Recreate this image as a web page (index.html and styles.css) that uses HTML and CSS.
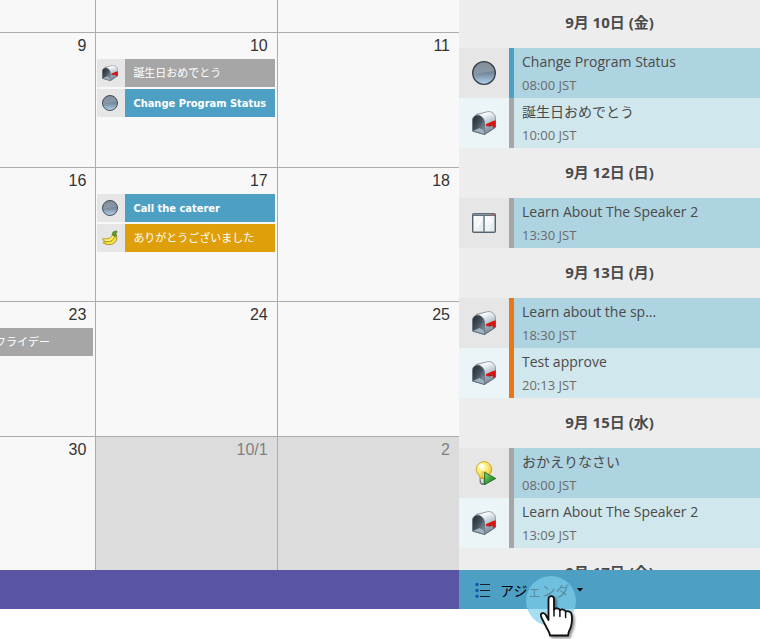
FILE: index.html
```html
<!DOCTYPE html>
<html lang="ja">
<head>
<meta charset="utf-8">
<title>カレンダー</title>
<link rel="stylesheet" href="styles.css">
</head>
<body>
<svg class="sprite" aria-hidden="true">
  <defs>
    <linearGradient id="ball-fill" x1="0" y1="0" x2="0" y2="1">
      <stop offset="0" stop-color="#7f8a94"/>
      <stop offset=".5" stop-color="#74879a"/>
      <stop offset="1" stop-color="#b4d4f0"/>
    </linearGradient>
    <linearGradient id="ball-gloss" x1="0" y1="0" x2="0" y2="1">
      <stop offset="0" stop-color="#fff" stop-opacity=".05"/>
      <stop offset="1" stop-color="#fff" stop-opacity=".16"/>
    </linearGradient>
    <linearGradient id="box-side" x1="0" y1="0" x2=".35" y2="1">
      <stop offset="0" stop-color="#8d959b"/>
      <stop offset=".22" stop-color="#fbfcfd"/>
      <stop offset=".5" stop-color="#ccd6de"/>
      <stop offset="1" stop-color="#76889a"/>
    </linearGradient>
    <linearGradient id="box-inside" x1="0" y1="0" x2="1" y2="1">
      <stop offset="0" stop-color="#20282e"/>
      <stop offset=".5" stop-color="#46535e"/>
      <stop offset="1" stop-color="#9db1c1"/>
    </linearGradient>
    <radialGradient id="bulb-glass" cx=".4" cy=".35" r=".65">
      <stop offset="0" stop-color="#fffdd8"/>
      <stop offset=".55" stop-color="#fbea6c"/>
      <stop offset="1" stop-color="#e3bd2c"/>
    </radialGradient>
    <linearGradient id="play-fill" x1="0" y1="0" x2="1" y2="1">
      <stop offset="0" stop-color="#8fdc74"/>
      <stop offset=".5" stop-color="#3fa43a"/>
      <stop offset="1" stop-color="#1c7a22"/>
    </linearGradient>
    <linearGradient id="pane-fill" x1="0" y1="0" x2="1" y2="1">
      <stop offset="0" stop-color="#fff"/>
      <stop offset="1" stop-color="#dfe8ea"/>
    </linearGradient>
  </defs>
  <symbol id="ball" viewBox="0 0 24 24">
    <circle cx="12" cy="12" r="11.3" fill="url(#ball-fill)" stroke="#343c46" stroke-width="1.3"/>
    <path d="M1.800 13C2 6 7 2 12 2s9.500 3.500 10.200 8C17 10 9 12.500 1.800 13z" fill="url(#ball-gloss)"/>
  </symbol>
  <symbol id="mailbox" viewBox="0 0 24 24">
    <path d="M4 3.500L15.500.7C20 0 23.600 3 23.600 8v8.300L12.500 23.500V13C12 8 8 4 4 3.500z" fill="url(#box-side)" stroke="#737d86" stroke-width=".7"/>
    <path d="M.5 20V9.500C.5 2 12 2.500 12.500 12v11.500z" fill="url(#box-inside)" stroke="#66727d" stroke-width=".8"/>
    <path d="M1.200 19.700L7.500 17 12 20v3z" fill="#9fb1bf"/>
    <path d="M.5 20L12.500 23.500 23.600 16.400" fill="none" stroke="#5d6b78" stroke-width=".8"/>
    <path d="M14 13.200L20 10.500 23.700 9.300v6.400L20.800 17V13.300L14 15z" fill="#e30b0b"/>
    <path d="M14 15L20.800 13.300v1.500L17 15.400z" fill="#9c1414"/>
  </symbol>
  <symbol id="window" viewBox="0 0 24 24">
    <rect x=".5" y="2.500" width="23" height="19" rx="1" fill="#63727a" stroke="#54636c"/>
    <path d="M1.500 3.300h21" stroke="#8f9ba2"/>
    <rect x="1.500" y="5" width="10" height="15.500" fill="url(#pane-fill)"/>
    <rect x="12.700" y="5" width="9.800" height="15.500" fill="url(#pane-fill)"/>
    <path d="M12.100 5v16" stroke="#82939e" stroke-width="1.500"/>
    <path d="M5 16l5-9M16 7l4 5" stroke="#fff" stroke-width="1.500"/>
    <rect x="20" y="3" width="2" height="1.500" fill="#f04848"/>
  </symbol>
  <symbol id="bulb" viewBox="0 0 24 24">
    <path d="M8 17h7v4.500L13.500 23.500h-4L8 21.500z" fill="#7d8489" stroke="#555c60" stroke-width=".6"/>
    <path d="M8.500 18h3v4h-2z" fill="#dfe4e6"/>
    <path d="M12 .6a7.800 7.800 0 0 1 7.800 7.900c0 3.500-3.300 5.200-4.100 9H8.300c-.8-3.800-4.100-5.500-4.100-9A7.800 7.800 0 0 1 12 .6z" fill="url(#bulb-glass)" stroke="#c99d22" stroke-width=".8"/>
    <path d="M10.500 17L10 10.500l2 1 2-1-.5 6.500" fill="none" stroke="#d4ae35" stroke-width=".8"/>
    <ellipse cx="9.500" cy="5" rx="3" ry="2.300" fill="#fff" opacity=".75"/>
    <path d="M12.600 11.300L23.700 17.500 12.600 23.600z" fill="url(#play-fill)" stroke="#1b6422" stroke-width=".9" stroke-linejoin="round"/>
  </symbol>
  <symbol id="banana" viewBox="0 0 16 16">
    <path d="M12 4.500C12.500 9 9 12 3 11.500L1 12.500C4 16 15 15.500 14.800 7.500L13.800 4z" fill="#f2d71c" stroke="#8f7710" stroke-width=".7"/>
    <path d="M10.500 4.500C9.500 8 6 9.500 1 8.500L.6 9.800C5 13.500 12.500 11.500 12.800 5z" fill="#fbe94c" stroke="#9c8415" stroke-width=".7"/>
    <path d="M10 4.800L11 1.800 14.500.8 15.300 2.200 13.800 3l.7 3-1.700.2z" fill="#5d9a2c" stroke="#3f6d20" stroke-width=".5"/>
    <path d="M3 10.200c3.500 1 6.500-.2 8.200-3M5 13c3.500 1 7-.5 8.500-4" fill="none" stroke="#fffac0" stroke-width=".7"/>
  </symbol>
</svg>

<div class="app">
  <main class="workspace">
    <section class="calendar" aria-label="カレンダー">
      <table class="month">
        <colgroup><col class="col-thu"><col class="col-fri"><col class="col-sat"></colgroup>
        <tbody>
          <tr class="week-partial"><td></td><td></td><td></td></tr>
          <tr>
            <td><div class="date">9</div></td>
            <td>
              <div class="date">10</div>
              <div class="chip chip-gray"><svg class="chip-icon"><use href="#mailbox"/></svg><span class="chip-label">誕生日おめでとう</span></div>
              <div class="chip chip-blue"><svg class="chip-icon"><use href="#ball"/></svg><span class="chip-label">Change Program Status</span></div>
            </td>
            <td><div class="date">11</div></td>
          </tr>
          <tr>
            <td><div class="date">16</div></td>
            <td>
              <div class="date">17</div>
              <div class="chip chip-blue"><svg class="chip-icon"><use href="#ball"/></svg><span class="chip-label">Call the caterer</span></div>
              <div class="chip chip-gold"><svg class="chip-icon"><use href="#banana"/></svg><span class="chip-label">ありがとうございました</span></div>
            </td>
            <td><div class="date">18</div></td>
          </tr>
          <tr>
            <td>
              <div class="date">23</div>
              <div class="chip chip-gray chip-continued"><span class="chip-label">フライデー</span></div>
            </td>
            <td><div class="date">24</div></td>
            <td><div class="date">25</div></td>
          </tr>
          <tr>
            <td><div class="date">30</div></td>
            <td class="outside"><div class="date">10/1</div></td>
            <td class="outside"><div class="date">2</div></td>
          </tr>
        </tbody>
      </table>
    </section>

    <aside class="agenda" aria-label="アジェンダ">
      <div class="agenda-scroll">
        <h2 class="day">9月 10日 (金)</h2>
        <ul class="entries">
          <li class="entry mark-blue"><span class="entry-icon"><svg><use href="#ball"/></svg></span><div class="entry-text"><div class="entry-title">Change Program Status</div><div class="entry-time">08:00 JST</div></div></li>
          <li class="entry mark-gray"><span class="entry-icon"><svg><use href="#mailbox"/></svg></span><div class="entry-text"><div class="entry-title">誕生日おめでとう</div><div class="entry-time">10:00 JST</div></div></li>
        </ul>
        <h2 class="day">9月 12日 (日)</h2>
        <ul class="entries">
          <li class="entry mark-gray"><span class="entry-icon"><svg><use href="#window"/></svg></span><div class="entry-text"><div class="entry-title">Learn About The Speaker 2</div><div class="entry-time">13:30 JST</div></div></li>
        </ul>
        <h2 class="day">9月 13日 (月)</h2>
        <ul class="entries">
          <li class="entry mark-orange"><span class="entry-icon"><svg><use href="#mailbox"/></svg></span><div class="entry-text"><div class="entry-title">Learn about the sp...</div><div class="entry-time">18:30 JST</div></div></li>
          <li class="entry mark-orange"><span class="entry-icon"><svg><use href="#mailbox"/></svg></span><div class="entry-text"><div class="entry-title">Test approve</div><div class="entry-time">20:13 JST</div></div></li>
        </ul>
        <h2 class="day">9月 15日 (水)</h2>
        <ul class="entries">
          <li class="entry mark-gray"><span class="entry-icon"><svg><use href="#bulb"/></svg></span><div class="entry-text"><div class="entry-title">おかえりなさい</div><div class="entry-time">08:00 JST</div></div></li>
          <li class="entry mark-gray"><span class="entry-icon"><svg><use href="#mailbox"/></svg></span><div class="entry-text"><div class="entry-title">Learn About The Speaker 2</div><div class="entry-time">13:09 JST</div></div></li>
        </ul>
        <h2 class="day">9月 17日 (金)</h2>
      </div>
    </aside>
  </main>

  <footer class="bar">
    <div class="bar-main"></div>
    <div class="bar-agenda">
      <button class="view-button" type="button">
        <svg class="list-icon" viewBox="0 0 17 17" aria-hidden="true">
          <g fill="#1259b0"><circle cx="3" cy="3.500" r="1.700"/><circle cx="3" cy="9.500" r="1.700"/><circle cx="3" cy="15.200" r="1.700"/></g>
          <path d="M6 3.500h10M6 9.500h10M6 15.500h10" stroke="#1a2226" stroke-width="1.200"/>
        </svg>
        <span>アジェンダ</span>
        <svg class="caret" viewBox="0 0 6 4" aria-hidden="true"><path d="M0 0h6L3 3.500z"/></svg>
      </button>
      <div class="pointer" aria-hidden="true">
        <svg class="hand" viewBox="0 0 36 44">
          <path d="M9.500 25V4C9.500.2 15 .2 15 4v10.500c1.500-2 5.500-1.500 5.900.8 1.900-1.500 5.300-1 5.700 1.400 2.400-1.200 5.700 0 5.900 2.600.8 4 .5 9-.7 13-.7 2.300-2.700 4.200-2.700 8.200H11c0-3-2-5-3.500-8-1.500-3.500-4.500-8-5.500-11.500-.7-3 2.700-4 4.500-1.500z" fill="#fff" stroke="#111" stroke-width="1.800" stroke-linejoin="round"/>
          <path d="M15 14v7M20.900 15.500v6M26.600 17v5.500" fill="none" stroke="#111" stroke-width="1.500" stroke-linecap="round"/>
        </svg>
      </div>
    </div>
  </footer>
</div>
</body>
</html>
```

FILE: styles.css
```css
* {
  box-sizing: border-box;
}

body {
  margin: 0;
  background: #fff;
  font-family: "Open Sans", "Noto Sans CJK JP", sans-serif;
  font-size: 14px;
}

.sprite {
  position: absolute;
  width: 0;
  height: 0;
}

.app {
  display: flex;
  flex-direction: column;
  height: 100vh;
  padding-bottom: 30px;
  overflow: hidden;
}

.workspace {
  display: flex;
  flex: 1;
  min-height: 0;
}

.calendar {
  flex: 1;
  min-width: 0;
  overflow: hidden;
  background: #f8f8f8;
}

.month {
  width: 100%;
  table-layout: fixed;
  border-collapse: separate;
  border-spacing: 0;
}

.col-thu {
  width: 21%;
}

.month tr {
  height: 134px;
}

.month tr:nth-child(even) {
  height: 135px;
}

.month .week-partial {
  height: 33px;
}

.month td {
  padding: 0 2px 0 1px;
  overflow: hidden;
  vertical-align: top;
  border-right: 1px solid #acacac;
  border-bottom: 1px solid #acacac;
}

.month td:first-child {
  padding-left: 0;
}

.month td:last-child {
  border-right: 0;
}

.month .outside {
  background: #dcdcdc;
}

.date {
  height: 26px;
  padding-right: 7px;
  color: #333;
  font-family: "Liberation Sans", Arial, sans-serif;
  font-size: 16px;
  line-height: 26px;
  text-align: right;
}

.outside .date {
  color: #808080;
}

.chip {
  display: flex;
  align-items: center;
  height: 28px;
  margin-bottom: 2px;
  background: #e6e6e6;
  color: #fff;
}

.chip-icon {
  flex: none;
  width: 16px;
  height: 16px;
  margin: 0 7px 0 5px;
}

.chip-label {
  flex: 1;
  height: 28px;
  padding-left: 8px;
  overflow: hidden;
  font-family: "DejaVu Sans Condensed", "Noto Sans CJK JP", sans-serif;
  font-size: 11px;
  line-height: 30px;
  white-space: nowrap;
}

.chip-blue .chip-label {
  background: #4e9fc4;
  font-weight: 700;
}

.chip-gray .chip-label {
  background: #a6a6a6;
}

.chip-gold .chip-label {
  background: #df9f0b;
}

/* Event that began on an earlier day, off the left edge. */
.chip-continued {
  margin-left: -13px;
}

.agenda {
  flex: none;
  width: 301px;
  overflow: hidden;
  background: #ededed;
}

.agenda-scroll {
  margin-top: -2px;
}

.day {
  height: 50px;
  margin: 0;
  color: #4a4a4a;
  font-size: 15px;
  font-weight: 700;
  line-height: 48px;
  text-align: center;
}

.entries {
  margin: 0;
  padding: 0;
  list-style: none;
}

.entry {
  display: flex;
  height: 50px;
  background: #aed3e1;
}

.entry:nth-child(even) {
  background: #d0e7ed;
}

.entry-icon {
  display: flex;
  align-items: center;
  justify-content: center;
  width: 50px;
  background: #e6e6e6;
}

.entry:nth-child(even) .entry-icon {
  background: #ebf5f8;
}

.entry-icon svg {
  width: 24px;
  height: 24px;
}

.entry-text {
  flex: 1;
  padding: 2px 8px;
  border-left: 5px solid #a6a6a6;
}

.mark-blue .entry-text {
  border-color: #4e9fc4;
}

.mark-orange .entry-text {
  border-color: #e87817;
}

.entry-title {
  color: #4a4a4a;
  font-size: 14px;
  line-height: 24px;
}

.entry-time {
  color: #6b6b6b;
  font-size: 13px;
  line-height: 22px;
}

.bar {
  display: flex;
  flex: none;
  height: 39px;
}

.bar-main {
  flex: 1;
  background: #5a54a4;
}

.bar-agenda {
  position: relative;
  width: 301px;
  background: #4e9fc4;
}

.view-button {
  display: flex;
  align-items: center;
  height: 100%;
  padding: 0 15px;
  border: 0;
  background: none;
  color: #000;
  font: inherit;
}

.list-icon {
  width: 17px;
  height: 17px;
  margin-right: 9px;
}

.caret {
  width: 6px;
  height: 4px;
  margin-left: 8px;
}

/* Click highlight with the hand over it. */
.pointer {
  position: absolute;
  top: 6px;
  left: 67px;
  width: 50px;
  height: 50px;
  border-radius: 50%;
  background: rgba(127, 207, 235, 0.68);
}

.hand {
  position: absolute;
  top: 19px;
  left: 13px;
  width: 36px;
  height: 44px;
  filter: drop-shadow(2px 2px 1px rgba(0, 0, 0, 0.4));
}
```
